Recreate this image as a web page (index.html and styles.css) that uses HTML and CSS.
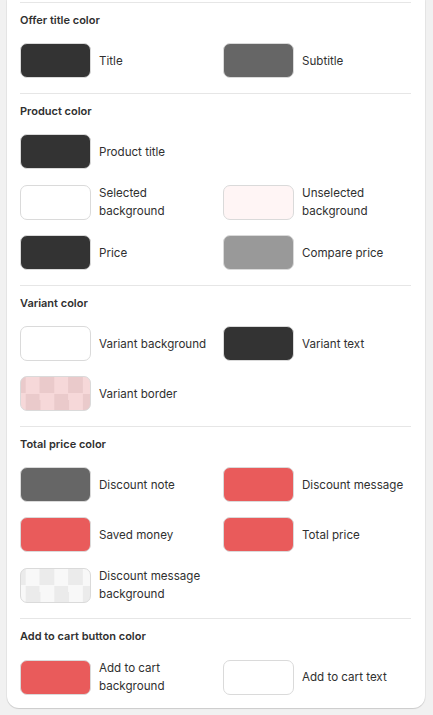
FILE: index.html
```html
<!DOCTYPE html>
<html lang="en">
<head>
  <meta charset="UTF-8">
  <meta name="viewport" content="width=device-width, initial-scale=1.0">
  <title>Color settings</title>
  <link rel="stylesheet" href="styles.css">
</head>
<body>

<div class="settings-card">
  <div class="color-section">
    <h3>Offer title color</h3>
    <div class="color-grid">
      <div class="color-item"><span class="swatch dark"></span><span class="label">Title</span></div>
      <div class="color-item"><span class="swatch gray"></span><span class="label">Subtitle</span></div>
    </div>
  </div>

  <div class="color-section">
    <h3>Product color</h3>
    <div class="color-grid">
      <div class="color-item"><span class="swatch dark"></span><span class="label">Product title</span></div>
      <div></div>
      <div class="color-item"><span class="swatch white"></span><span class="label">Selected background</span></div>
      <div class="color-item"><span class="swatch blush"></span><span class="label">Unselected background</span></div>
      <div class="color-item"><span class="swatch dark"></span><span class="label">Price</span></div>
      <div class="color-item"><span class="swatch light-gray"></span><span class="label">Compare price</span></div>
    </div>
  </div>

  <div class="color-section">
    <h3>Variant color</h3>
    <div class="color-grid">
      <div class="color-item"><span class="swatch white"></span><span class="label">Variant background</span></div>
      <div class="color-item"><span class="swatch dark"></span><span class="label">Variant text</span></div>
      <div class="color-item"><span class="swatch checker-pink"></span><span class="label">Variant border</span></div>
    </div>
  </div>

  <div class="color-section">
    <h3>Total price color</h3>
    <div class="color-grid">
      <div class="color-item"><span class="swatch gray"></span><span class="label">Discount note</span></div>
      <div class="color-item"><span class="swatch red"></span><span class="label">Discount message</span></div>
      <div class="color-item"><span class="swatch red"></span><span class="label">Saved money</span></div>
      <div class="color-item"><span class="swatch red"></span><span class="label">Total price</span></div>
      <div class="color-item"><span class="swatch checker-gray"></span><span class="label">Discount message background</span></div>
    </div>
  </div>

  <div class="color-section">
    <h3>Add to cart button color</h3>
    <div class="color-grid">
      <div class="color-item"><span class="swatch red"></span><span class="label">Add to cart background</span></div>
      <div class="color-item"><span class="swatch white"></span><span class="label">Add to cart text</span></div>
    </div>
  </div>
</div>

</body>
</html>
```

FILE: styles.css
```css
body {
  font-family: Inter, "Noto Sans", sans-serif;
  background-color: #f1f1f1;
  color: #303030;
  margin: 0;
  padding: 0 8px 7px 7px;
}

.settings-card {
  background-color: #fff;
  padding: 2px 14px 0 13px;
  border-radius: 0 0 12px 12px;
  box-shadow: 0 1px 1px rgba(0, 0, 0, 0.12), 0 0 0 1px rgba(0, 0, 0, 0.04);
}

.color-section {
  border-top: 1px solid #e6e6e6;
  padding: 11px 0 15px;
}

.color-section:last-child {
  padding-bottom: 13px;
}

.color-section h3 {
  margin: 0 0 16px;
  font-size: 11px;
  line-height: 13px;
  font-weight: 600;
}

.color-grid {
  display: grid;
  grid-template-columns: 1fr 1fr;
  column-gap: 15px;
  row-gap: 15px;
}

.color-item {
  display: flex;
  align-items: center;
  gap: 8px;
}

.label {
  font-size: 11.6px;
  line-height: 18px;
}

.swatch {
  flex-shrink: 0;
  width: 71px;
  height: 35px;
  box-sizing: border-box;
  border: 1px solid #dadada;
  border-radius: 7px;
}

.dark { background-color: #333; }
.gray { background-color: #666; }
.light-gray { background-color: #999; }
.white { background-color: #fff; }
.blush { background-color: #fff5f5; }
.red { background-color: #e95b5b; }

.checker-pink {
  background-color: #f6d8d9;
  background-image: conic-gradient(#eacacb 25%, transparent 0 50%, #eacacb 0 75%, transparent 0);
  background-size: 28.6px 33px;
  background-position: 4.7px 0;
}

.checker-gray {
  background-color: #f8f8f8;
  background-image: conic-gradient(#ebebeb 25%, transparent 0 50%, #ebebeb 0 75%, transparent 0);
  background-size: 28.6px 33px;
  background-position: 4.7px 0;
}
```
